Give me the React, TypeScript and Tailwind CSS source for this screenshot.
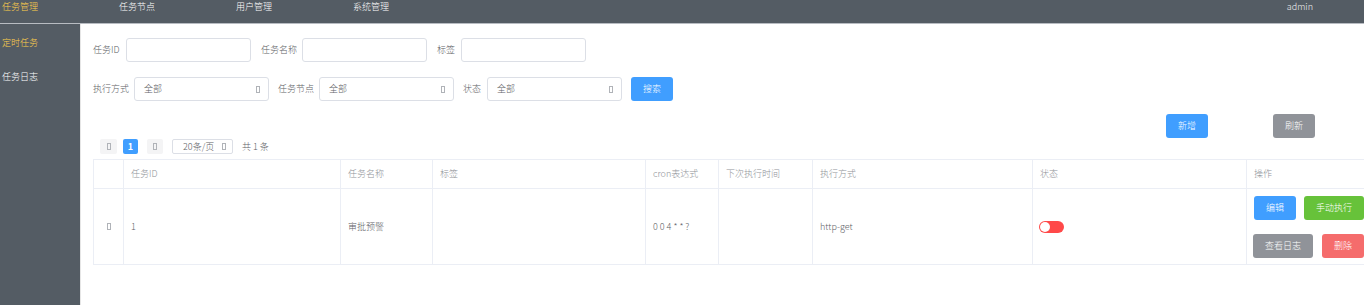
import React from 'react';

const menus = ['任务管理', '任务节点', '用户管理', '系统管理'];

const Glyph = ({ className = '' }: { className?: string }) => (
  <span className={`inline-block w-[4px] h-[7px] border border-[#b0b3b8] ${className}`} />
);

const Field = ({ label, lw, className = '' }: { label: string; lw: string; className?: string }) => (
  <div className={`flex items-center ${className}`}>
    <span className={`${lw} text-[#606266]`}>{label}</span>
    <div className="w-[125px] h-[24px] border border-[#dcdfe6] rounded-[3px] bg-white" />
  </div>
);

const Select = ({ label, lw, className = '' }: { label: string; lw: string; className?: string }) => (
  <div className={`flex items-center ${className}`}>
    <span className={`${lw} text-[#606266]`}>{label}</span>
    <div className="w-[135px] h-[24px] border border-[#dcdfe6] rounded-[3px] bg-white flex items-center pl-[9px] pr-[8px] text-[#606266]">
      <span>全部</span>
      <Glyph className="ml-auto" />
    </div>
  </div>
);

const Btn = ({ text, color, w }: { text: string; color: string; w: string }) => (
  <button className={`${w} h-[24px] ${color} text-white rounded-[3px] text-[9px] flex items-center justify-center`}>
    {text}
  </button>
);

const cols = 'grid grid-cols-[30px_217px_92px_213px_73px_94px_220px_214px_130px]';
const cell = 'border-r border-[#ebeef5] pl-[7px] flex items-center';

export default function App() {
  return (
    <div
      className="w-[1364px] h-[305px] overflow-hidden bg-white flex flex-col text-[9px] font-light"
      style={{ fontFamily: '"Noto Sans CJK SC", "Noto Sans", sans-serif' }}
    >
      <header className="h-[24px] shrink-0 bg-[#545c64] border-b border-[#b8bcc2] flex text-white leading-[13px]">
        {menus.map((m, i) => (
          <div key={m} className={`w-[117px] pl-[2px] ${i === 0 ? 'text-[#ffd04b]' : ''}`}>
            {m}
          </div>
        ))}
        <div className="ml-auto mr-[51px] text-[#f0f0f0]">admin</div>
      </header>

      <div className="flex flex-1 min-h-0">
        <aside className="w-[81px] shrink-0 bg-[#545c64] border-r border-[#e6e6e6] leading-[12px]">
          <div className="mt-[13px] pl-[2px] text-[#ffd04b]">定时任务</div>
          <div className="mt-[22px] pl-[2px] text-white">任务日志</div>
        </aside>

        <main className="flex-1 min-w-0 pl-[12px] pt-[14px]">
          <div className="flex items-center h-[24px]">
            <Field label="任务ID" lw="w-[33px]" />
            <Field label="任务名称" lw="w-[41px]" className="ml-[10px]" />
            <Field label="标签" lw="w-[24px]" className="ml-[10px]" />
          </div>

          <div className="flex items-center h-[24px] mt-[15px]">
            <Select label="执行方式" lw="w-[41px]" />
            <Select label="任务节点" lw="w-[41px]" className="ml-[9px]" />
            <Select label="状态" lw="w-[24px]" className="ml-[9px]" />
            <div className="ml-[9px]">
              <Btn text="搜索" color="bg-[#409eff]" w="w-[42px]" />
            </div>
          </div>

          <div className="flex justify-end mt-[13px] pr-[49px] gap-[65px]">
            <Btn text="新增" color="bg-[#409eff]" w="w-[42px]" />
            <Btn text="刷新" color="bg-[#909399]" w="w-[42px]" />
          </div>

          <div className="flex items-center mt-[1px] pl-[7px] h-[15px] text-[#606266]">
            <div className="w-[17px] h-[15px] bg-[#f4f4f5] rounded-[2px] flex items-center justify-center">
              <Glyph />
            </div>
            <div className="ml-[6px] w-[15px] h-[15px] bg-[#409eff] rounded-[2px] text-white font-bold flex items-center justify-center">
              1
            </div>
            <div className="ml-[9px] w-[16px] h-[15px] bg-[#f4f4f5] rounded-[2px] flex items-center justify-center">
              <Glyph />
            </div>
            <div className="ml-[9px] w-[61px] h-[15px] border border-[#dcdfe6] rounded-[2px] flex items-center pl-[10px] pr-[6px]">
              <span>20条/页</span>
              <Glyph className="ml-auto" />
            </div>
            <span className="ml-[9px]">共 1 条</span>
          </div>

          <div className="mt-[5px] border-l border-t border-[#ebeef5] w-max">
            <div className={`${cols} h-[29px] border-b border-[#ebeef5] text-[#909399]`}>
              <div className={cell} />
              <div className={cell}>任务ID</div>
              <div className={cell}>任务名称</div>
              <div className={cell}>标签</div>
              <div className={cell}>cron表达式</div>
              <div className={cell}>下次执行时间</div>
              <div className={cell}>执行方式</div>
              <div className={cell}>状态</div>
              <div className={cell}>操作</div>
            </div>
            <div className={`${cols} h-[76px] border-b border-[#ebeef5] text-[#606266]`}>
              <div className={`${cell} justify-center !pl-0`}>
                <Glyph />
              </div>
              <div className={cell}>1</div>
              <div className={cell}>审批预警</div>
              <div className={cell} />
              <div className={cell}>0 0 4 * * ?</div>
              <div className={cell} />
              <div className={cell}>http-get</div>
              <div className={`${cell} !pl-[6px]`}>
                <div className="w-[25px] h-[12px] rounded-full bg-[#ff4949] flex items-center pl-[1px]">
                  <div className="w-[10px] h-[10px] rounded-full bg-white" />
                </div>
              </div>
              <div className="pl-[7px] flex flex-col justify-center gap-[14px]">
                <div className="flex gap-[8px]">
                  <Btn text="编辑" color="bg-[#409eff]" w="w-[42px]" />
                  <Btn text="手动执行" color="bg-[#67c23a]" w="w-[60px]" />
                </div>
                <div className="flex gap-[9px] -ml-[1px]">
                  <Btn text="查看日志" color="bg-[#909399]" w="w-[60px]" />
                  <Btn text="删除" color="bg-[#f56c6c]" w="w-[42px]" />
                </div>
              </div>
            </div>
          </div>
        </main>
      </div>
    </div>
  );
}
